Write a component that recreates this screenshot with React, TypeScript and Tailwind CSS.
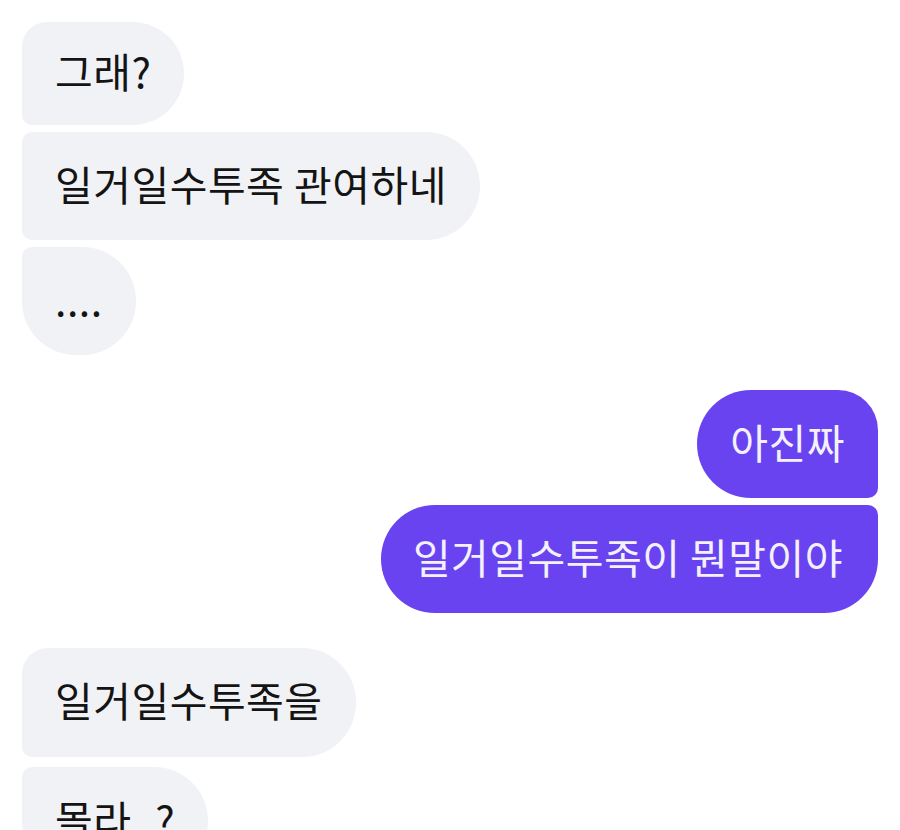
import React from "react";

const font = { fontFamily: '"Noto Sans CJK KR", "Noto Sans", sans-serif' };

export default function App() {
  return (
    <div
      className="w-[900px] h-[830px] overflow-hidden bg-white px-[22px] pt-[22px] flex flex-col"
      style={font}
    >
      <div className="flex flex-col items-start gap-[7px]">
        <div className="h-[103px] flex items-center px-[33px] pb-[5px] bg-[#f1f2f5] text-[#141414] text-[41px] tracking-[0.5px] rounded-tl-[26px] rounded-tr-[54px] rounded-br-[54px] rounded-bl-[10px]">
          그래?
        </div>
        <div className="h-[108px] flex items-center px-[33px] pb-[5px] bg-[#f1f2f5] text-[#141414] text-[41px] tracking-[0.5px] rounded-tl-[10px] rounded-tr-[54px] rounded-br-[54px] rounded-bl-[10px]">
          일거일수투족 관여하네
        </div>
        <div className="h-[108px] flex items-center px-[33px] pb-[5px] bg-[#f1f2f5] text-[#141414] text-[41px] tracking-[0.5px] rounded-tl-[10px] rounded-tr-[54px] rounded-br-[54px] rounded-bl-[54px]">
          ....
        </div>
      </div>

      <div className="mt-[35px] flex flex-col items-end gap-[7px]">
        <div className="h-[108px] flex items-center px-[33px] pb-[5px] bg-[#6a43f1] text-[#f4f1ff] text-[41px] tracking-[0.5px] rounded-tl-[54px] rounded-tr-[40px] rounded-br-[10px] rounded-bl-[54px]">
          아진짜
        </div>
        <div className="h-[108px] flex items-center pl-[32px] pr-[35px] pb-[5px] bg-[#6a43f1] text-[#f4f1ff] text-[41px] tracking-[0.5px] rounded-tl-[54px] rounded-tr-[10px] rounded-br-[54px] rounded-bl-[54px]">
          일거일수투족이 뭔말이야
        </div>
      </div>

      <div className="mt-[35px] flex flex-col items-start gap-[10px]">
        <div className="h-[109px] flex items-center px-[33px] pb-[5px] bg-[#f1f2f5] text-[#141414] text-[41px] tracking-[0.5px] rounded-tl-[26px] rounded-tr-[54px] rounded-br-[54px] rounded-bl-[10px]">
          일거일수투족을
        </div>
        <div className="h-[108px] shrink-0 flex items-center px-[33px] pb-[5px] bg-[#f1f2f5] text-[#141414] text-[41px] tracking-[0.5px] rounded-tl-[10px] rounded-tr-[54px] rounded-br-[54px] rounded-bl-[54px]">
          몰라..?
        </div>
      </div>
    </div>
  );
}
